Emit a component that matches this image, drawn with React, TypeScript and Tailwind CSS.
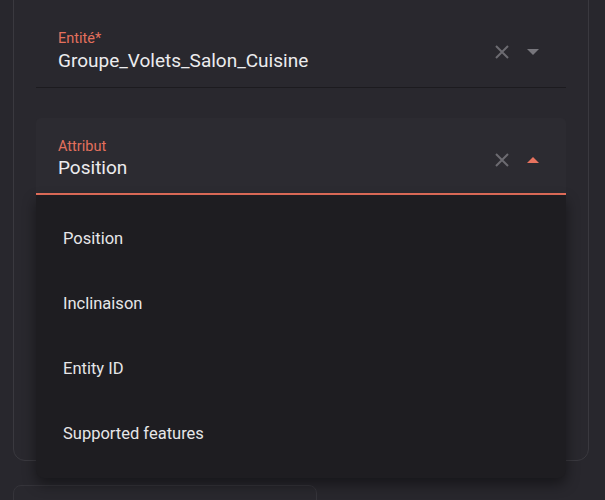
import React from "react";

const ClearIcon = () => (
  <svg width="14" height="14" viewBox="0 0 14 14" className="text-[#6c6b71]">
    <path d="M1 1 L13 13 M13 1 L1 13" stroke="currentColor" strokeWidth="2" />
  </svg>
);

const Arrow = ({ up }: { up?: boolean }) => (
  <svg width="12" height="6" viewBox="0 0 12 6">
    {up ? (
      <path d="M0 6 L6 0 L12 6 Z" fill="#e8735f" />
    ) : (
      <path d="M0 0 L6 6 L12 0 Z" fill="#77767c" />
    )}
  </svg>
);

const options = ["Position", "Inclinaison", "Entity ID", "Supported features"];

export default function App() {
  return (
    <div className="h-[500px] w-[605px] overflow-hidden bg-[#28272d] font-['Roboto',sans-serif]">
      <div className="ml-[13px] -mt-[12px] h-[473px] w-[576px] rounded-xl border border-[#3a393f] bg-[#29282e] px-[22px] pt-[22px]">
        {/* Entité field */}
        <div className="flex h-[77px] items-start border-b border-[#1c1b1f] pl-[22px] pr-[27px]">
          <div className="flex-1 pt-[19px]">
            <div className="text-[14.5px] leading-[18px] text-[#e3705d]">Entité*</div>
            <div className="mt-[1px] text-[19px] leading-[24px] text-[#ececee]">
              Groupe_Volets_Salon_Cuisine
            </div>
          </div>
          <div className="mt-[34px] flex items-center gap-[18px]">
            <ClearIcon />
            <Arrow />
          </div>
        </div>

        {/* Attribut field */}
        <div className="relative mt-[30px]">
          <div className="flex h-[77px] items-start rounded-t-[5px] border-b-2 border-[#e8705c] bg-[#2c2b31] pl-[22px] pr-[27px]">
            <div className="flex-1 pt-[20px]">
              <div className="text-[14.5px] leading-[18px] text-[#e3705d]">Attribut</div>
              <div className="text-[19px] leading-[24px] text-[#ececee]">Position</div>
            </div>
            <div className="mt-[35px] flex items-center gap-[18px]">
              <ClearIcon />
              <Arrow up />
            </div>
          </div>

          <ul className="absolute left-0 right-0 top-full z-10 rounded-b-lg bg-[#1e1d21] pt-[12px] pb-[11px] shadow-[0_6px_14px_rgba(0,0,0,0.45)]">
            {options.map((o) => (
              <li
                key={o}
                className="flex h-[65px] items-center pl-[27px] text-[16.5px] text-[#e6e6e8]"
              >
                {o}
              </li>
            ))}
          </ul>
        </div>
      </div>

      <div className="ml-[13px] mt-[24px] h-[60px] w-[304px] rounded-t-lg border border-[#35343a] bg-[#29282e]" />
    </div>
  );
}
